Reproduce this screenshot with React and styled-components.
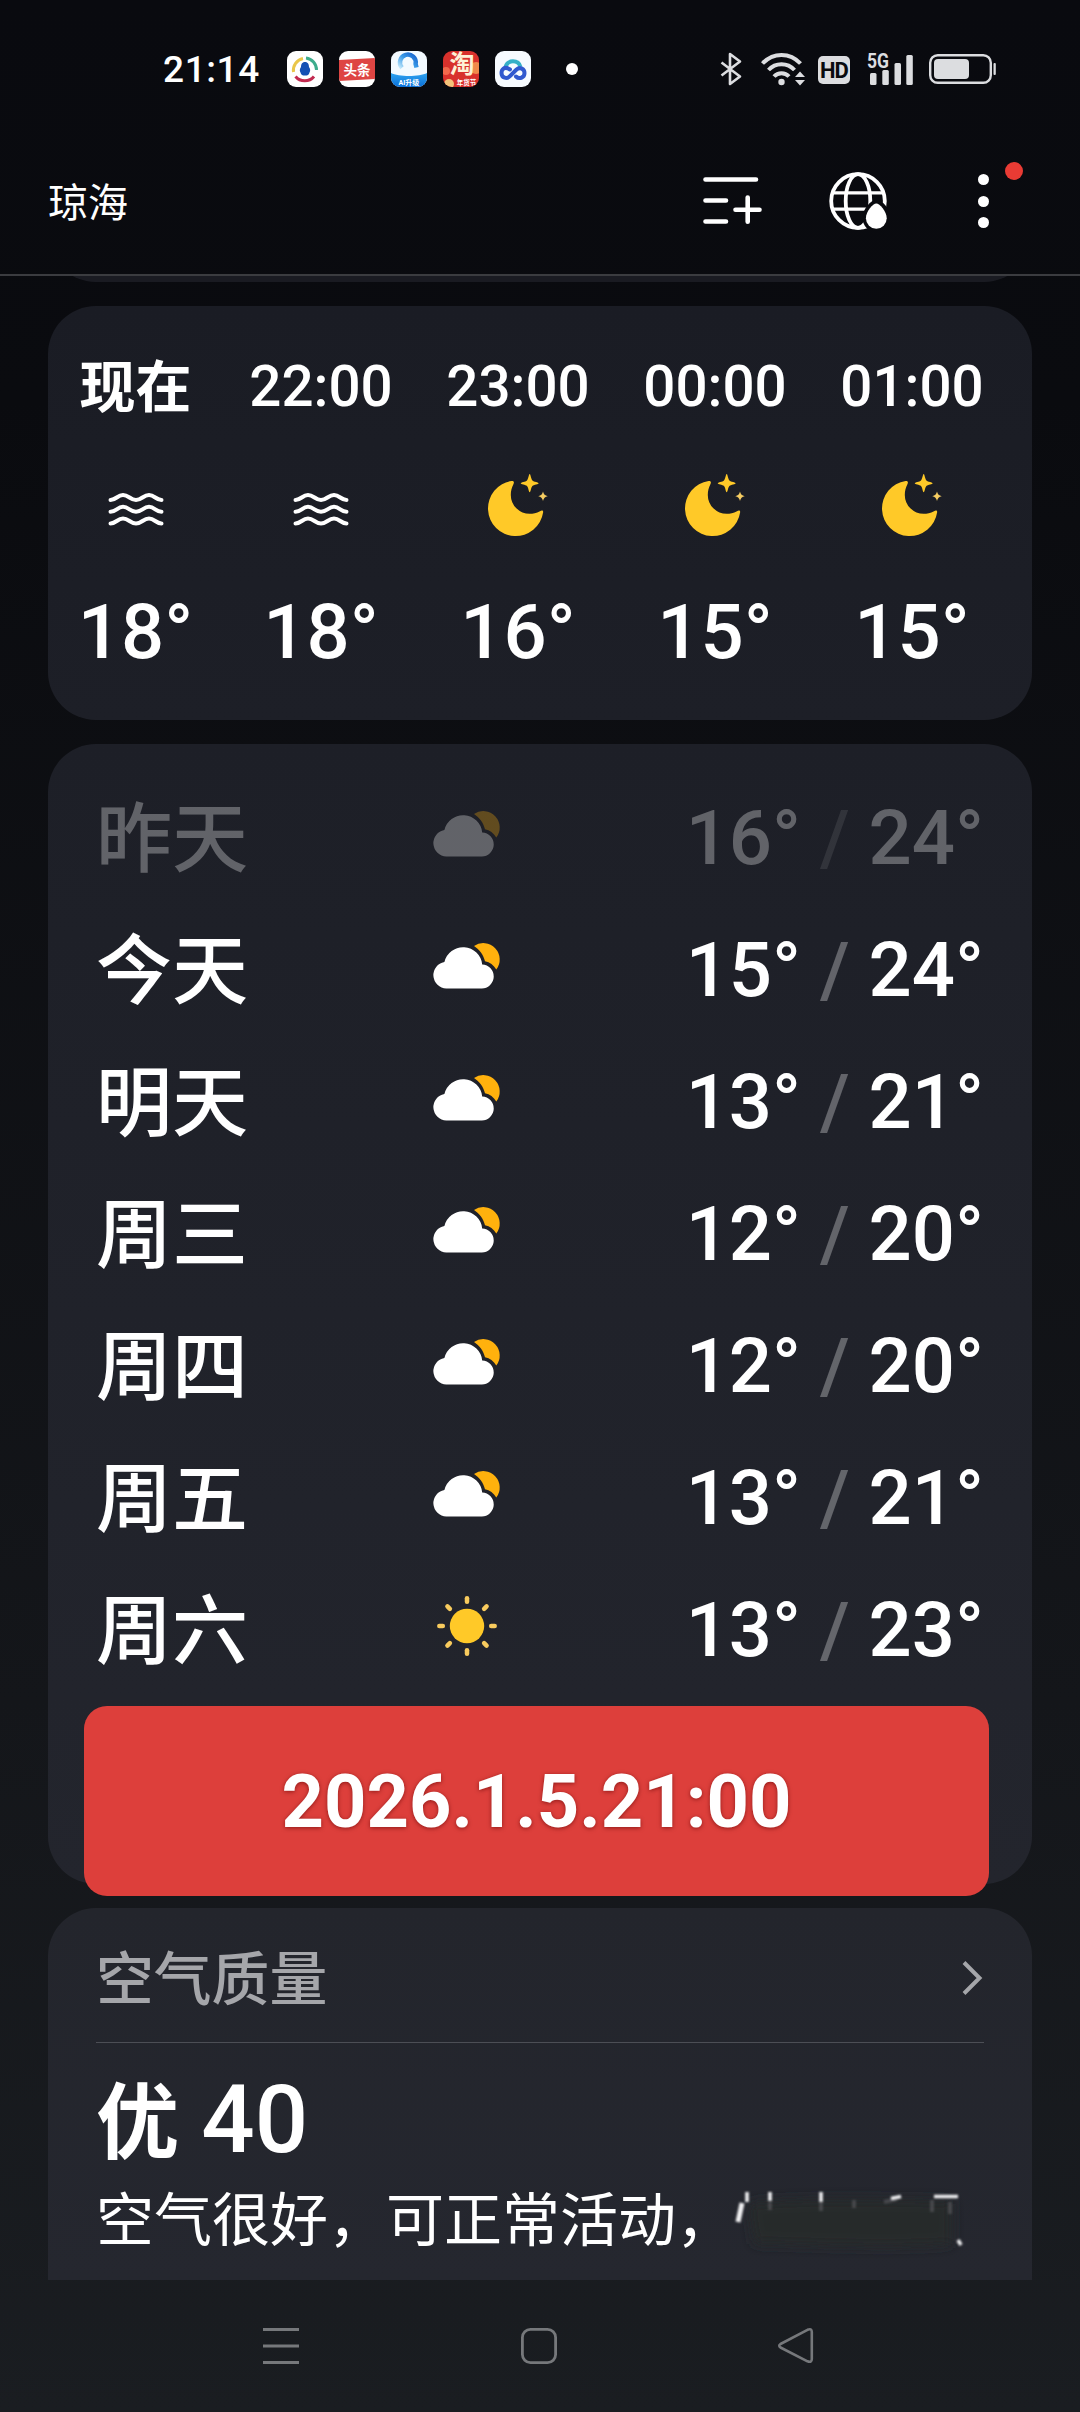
import React, { Component } from "react";
import styled, { createGlobalStyle } from "styled-components";

const GlobalStyle = createGlobalStyle`
    * {
        box-sizing: border-box;
    }
    body {
        margin: 0;
        background: #0a0b0f;
        color: #fff;
        font-family: Roboto, "Noto Sans CJK SC", sans-serif;
    }
    svg {
        display: block;
        flex: none;
        overflow: visible;
    }
`
let Screen = styled.div`
    width: 1080px;
    height: 2412px;
    display: flex;
    flex-direction: column;
    overflow: hidden;
    background: linear-gradient(#090a0f 0, #0a0b0f 400px, #14161a 1700px, #1a1d21 2412px);
`
let StatusBar = styled.div`
    height: 128px;
    padding: 10px 84px 0 163px;
    display: flex;
    align-items: center;
    flex: none;
`
let Clock = styled.span`
    width: 124px;
    padding-top: 1px;
    font-size: 37px;
    font-weight: 500;
    letter-spacing: 0.6px;
`
let AppIcons = styled.div`
    display: flex;
    gap: 16px;
    margin-right: 35px;
`
let MoreDot = styled.span`
    width: 12px;
    height: 12px;
    border-radius: 50%;
    background: #fff;
`
let SystemIcons = styled.div`
    display: flex;
    align-items: center;
    margin-left: auto;
    color: #dcdde0;
`
let HdBadge = styled.span`
    width: 32px;
    height: 28px;
    margin: 1px 17px 0 13px;
    border-radius: 5px;
    background: #dcdde0;
    color: #0a0b0f;
    font-size: 22px;
    font-weight: 700;
    line-height: 29px;
    text-align: center;
    letter-spacing: -1px;
`
let Header = styled.div`
    height: 148px;
    padding: 0 91px 0 48px;
    display: flex;
    align-items: center;
    flex: none;
    border-bottom: 2px solid #3b3c40;
`
let City = styled.h1`
    flex: 1;
    margin: 0;
    padding-bottom: 3px;
    font-size: 40px;
    font-weight: 400;
`
let HeaderIcons = styled.div`
    display: flex;
    align-items: center;
`
let MoreButton = styled.div`
    position: relative;
    margin-left: 89px;
    display: flex;
    flex-direction: column;
    gap: 10.5px;
    i {
        width: 11px;
        height: 11px;
        border-radius: 50%;
        background: #fff;
    }
    &::after {
        content: "";
        position: absolute;
        left: 27px;
        top: -12px;
        width: 18px;
        height: 18px;
        border-radius: 50%;
        background: #e93b34;
    }
`
let Content = styled.div`
    flex: 1;
    min-height: 0;
    padding: 0 48px;
    display: flex;
    flex-direction: column;
    gap: 24px;
    overflow: hidden;
`
let Card = styled.section`
    position: relative;
    flex: none;
    border-radius: 48px;
    background: linear-gradient(${props => props.$from}, ${props => props.$to});
`
// only the lower edge of this card is still in view
let ScrolledCard = styled(Card)`
    height: 96px;
    margin-top: -90px;
`
let HourlyCard = styled(Card)`
    height: 414px;
    padding: 45px 32px 0 31px;
    display: flex;
    gap: 61px;
    white-space: nowrap;
`
let Hour = styled.div`
    width: ${props => props.$now ? '113px' : '136px'};
    flex: none;
    display: flex;
    flex-direction: column;
    align-items: center;
    font-weight: 500;
    .time {
        height: 72px;
        font-size: ${props => props.$now ? '56px' : '56.5px'};
        font-weight: ${props => props.$now ? 700 : 500};
        line-height: ${props => props.$now ? '74px' : '73px'};
    }
    .icon {
        height: 166px;
        display: flex;
        align-items: center;
    }
    .temp {
        height: 84px;
        font-size: 76px;
        line-height: 87px;
    }
`
let DailyCard = styled(Card)`
    height: 1140px;
    padding: 28px 48px 0;
`
let Day = styled.div`
    height: 132px;
    display: grid;
    grid-template-columns: 338px 66px 1fr;
    grid-template-rows: 132px;
    align-items: center;
    font-size: 76px;
    font-weight: 500;
    line-height: 132px;
    opacity: ${props => props.$past ? 0.3 : 1};
    .name {
        padding-top: 3px;
    }
    .icon {
        padding-bottom: 10px;
        display: flex;
        justify-content: center;
    }
    .range {
        text-align: right;
        white-space: pre;
    }
    .range i {
        font-style: normal;
        opacity: 0.3;
    }
`
let Banner = styled.div`
    position: absolute;
    left: 36px;
    top: 962px;
    z-index: 1;
    width: 905px;
    height: 190px;
    border-radius: 23px;
    background: #dd3f3b;
    font-size: 74px;
    font-weight: 700;
    line-height: 191px;
    text-align: center;
    text-shadow: 0 1px 4px rgba(90, 0, 0, 0.6);
`
let AirCard = styled(Card)`
    height: 372px;
    padding: 0 48px;
    border-radius: 48px 48px 0 0;
`
let AirHeader = styled.div`
    height: 135px;
    display: flex;
    align-items: center;
    justify-content: space-between;
    border-bottom: 1px solid #4c4e55;
    color: #a5a6aa;
    font-size: 57.8px;
    font-weight: 500;
    svg {
        margin-top: 6px;
    }
`
let AirQuality = styled.div`
    height: 116px;
    margin-top: 19px;
    font-size: 94px;
    font-weight: 500;
    line-height: 117px;
    span {
        margin-right: -1px;
        font-size: 83px;
        font-weight: 700;
    }
`
let AirAdvice = styled.div`
    height: 84px;
    display: flex;
    font-size: 58px;
    line-height: 87px;
    white-space: nowrap;
`
let NavBar = styled.div`
    height: 132px;
    padding: 0 265px 0 262px;
    display: flex;
    align-items: center;
    justify-content: space-between;
    flex: none;
    color: #76787b;
`

const AppTile = ({ children, bg = '#fff' }) => (
    <svg width="36" height="36" viewBox="0 0 36 36">
        <defs>
            <clipPath id="tile"><rect width="36" height="36" rx="9" /></clipPath>
            <linearGradient id="sky" x1="0" y1="0" x2="0" y2="1">
                <stop offset="0" stopColor="#2fa4f0" />
                <stop offset="1" stopColor="#0a6fd8" />
            </linearGradient>
            <linearGradient id="ring" x1="0" y1="1" x2="1" y2="0">
                <stop offset="0" stopColor="#bfe6fa" />
                <stop offset="0.5" stopColor="#3a9be8" />
                <stop offset="1" stopColor="#1560cc" />
            </linearGradient>
        </defs>
        <g clipPath="url(#tile)">
            <rect width="36" height="36" fill={bg} />
            {children}
        </g>
    </svg>
)

const FogIcon = () => (
    <svg width="62" height="64" viewBox="0 0 62 64" fill="none" stroke="#fff" strokeWidth="4" strokeLinecap="round">
        {[0, 11.8, 23.5].map(y => (
            <path key={y} transform={`translate(0 ${y})`} d="M5.5 26 C11 26 12.5 21 18 21 C23.500 21 25.500 26 31 26 C36.500 26 38.500 21 44 21 C49.500 21 51 26 56.500 26" />
        ))}
    </svg>
)

const MoonIcon = () => (
    <svg width="62" height="64" viewBox="0 0 62 64" fill="#ffc928">
        <path d="M24.600 7 A27.700 27.700 0 1 0 56.100 38.500 C56.500 36.600 55 36 53 37.200 C49.500 39 46 39.800 42.700 39.800 A18.800 18.800 0 0 1 23.800 21 C23.800 17 24.800 13.500 26.400 10.300 C27.500 8 26.800 6.700 24.600 7Z" />
        <path d="M42.700 0 C43.600 0 44 5 45.400 6.400 C46.800 7.800 51.700 8.200 51.700 9.200 C51.700 10.200 46.800 10.600 45.400 12 C44 13.400 43.600 18.300 42.700 18.300 C41.800 18.300 41.400 13.400 40 12 C38.600 10.600 33.700 10.200 33.700 9.200 C33.700 8.200 38.600 7.800 40 6.400 C41.400 5 41.800 0 42.700 0Z" />
        <path fill="#f6cd62" d="M56 17.600 Q56.800 21.500 60.700 22.300 Q56.800 23.100 56 27 Q55.200 23.100 51.300 22.300 Q55.200 21.500 56 17.600Z" />
    </svg>
)

const CloudyIcon = () => (
    <svg width="68" height="47" viewBox="0 0 68 47">
        <path fill="#ffb10d" d="M41 4 A16.400 16.400 0 0 1 63.300 27.500 C60.500 23 57 20.300 52 19.300 C50.500 13 46.500 7.500 41 4Z" />
        <path fill="#fff" d="M13.300 46.400 A13.300 13.300 0 0 1 11.400 20 A19.200 19.200 0 0 1 49.200 22.400 A12 12 0 0 1 48.300 46.400Z" />
    </svg>
)

const SunnyIcon = () => (
    <svg width="62" height="62" viewBox="0 -1 62 62" stroke="#f8cb5e" strokeWidth="4.500" strokeLinecap="round">
        <circle cx="31" cy="31" r="17.200" fill="#ffc928" stroke="none" />
        {[0, 45, 90, 135, 180, 225, 270, 315].map(a => (
            <path key={a} transform={`rotate(${a} 31 31)`} d="M31 3.300 V6.800" />
        ))}
    </svg>
)

const icons = { fog: FogIcon, moon: MoonIcon, cloudy: CloudyIcon, sunny: SunnyIcon };

const WeatherIcon = ({ type }) => {
    const Icon = icons[type];
    return <div className="icon"><Icon /></div>;
}

class App extends Component {

    state = {
        hours: [
            { time: '现在', icon: 'fog', temp: 18 },
            { time: '22:00', icon: 'fog', temp: 18 },
            { time: '23:00', icon: 'moon', temp: 16 },
            { time: '00:00', icon: 'moon', temp: 15 },
            { time: '01:00', icon: 'moon', temp: 15 }
        ],
        days: [
            { name: '昨天', icon: 'cloudy', low: 16, high: 24 },
            { name: '今天', icon: 'cloudy', low: 15, high: 24 },
            { name: '明天', icon: 'cloudy', low: 13, high: 21 },
            { name: '周三', icon: 'cloudy', low: 12, high: 20 },
            { name: '周四', icon: 'cloudy', low: 12, high: 20 },
            { name: '周五', icon: 'cloudy', low: 13, high: 21 },
            { name: '周六', icon: 'sunny', low: 13, high: 23 }
        ]
    };

    renderStatusBar() {
        return (
            <StatusBar>
                <Clock>21:14</Clock>
                <AppIcons>
                    <AppTile>
                        <g fill="none" strokeWidth="3">
                            <path d="M6.500 21 A12 12 0 0 1 16 7.500" stroke="#e9c64a" />
                            <path d="M19 7 A12 12 0 0 1 29.500 19" stroke="#3dac8c" />
                            <path d="M8.500 25.500 A12 12 0 0 0 27 25.500" stroke="#c22a50" />
                        </g>
                        <path fill="#1450b4" d="M18 11 C21 11 22 13.500 22 16 C23.500 18 23.500 20 22.500 21.500 C22 24 20.500 24.500 18 24.500 C15.500 24.500 14 24 13.500 21.500 C12.500 20 12.500 18 14 16 C14 13.500 15 11 18 11Z" />
                    </AppTile>
                    <AppTile>
                        <path fill="#de4543" d="M0 9 L36 7 V28 L0 30Z" />
                        <text x="18" y="23.500" textAnchor="middle" fontSize="13.500" fontWeight="700" fill="#fff">头条</text>
                    </AppTile>
                    <AppTile bg="#f3faff">
                        <path fill="url(#sky)" d="M0 22 C8 26 28 26 36 22 V36 H0Z" />
                        <path fill="none" stroke="url(#ring)" strokeWidth="4.500" d="M11 16.800 A7.900 7.900 0 1 1 24.600 13 L25.500 16.500" />
                        <text x="18" y="33.800" textAnchor="middle" fontSize="7" fontWeight="700" fill="#fff">AI升级</text>
                    </AppTile>
                    <AppTile bg="#d8312c">
                        <circle cx="33" cy="17" r="6" fill="#f08a4b" />
                        <circle cx="3" cy="20" r="4" fill="#f2684c" />
                        <circle cx="6" cy="33" r="5" fill="#f3c37a" />
                        <text x="19" y="21.500" textAnchor="middle" fontSize="25" fontWeight="700" fill="#fdf1d6">淘</text>
                        <text x="23.500" y="33.800" textAnchor="middle" fontSize="6.500" fontWeight="700" fill="#fff">年货节</text>
                    </AppTile>
                    <AppTile bg="#f7fbff">
                        <path fill="none" stroke="#35b0c8" strokeWidth="4" d="M10.500 16 A7.800 7.800 0 0 1 25.500 16" />
                        <path fill="none" stroke="#3159cf" strokeWidth="4" strokeLinecap="round" d="M15 18.500 C9 14.500 6.500 19 6.500 22 C6.500 27 12 28.500 15 25 L21.500 18.500 C25 15.500 29.500 18 29.500 22 C29.500 27 24 28.500 21 25.500" />
                    </AppTile>
                </AppIcons>
                <MoreDot />
                <SystemIcons>
                    <svg width="22" height="34" viewBox="0 0 22 34" fill="none" stroke="currentColor" strokeWidth="2.600" strokeLinejoin="round">
                        <path d="M1.500 10.500 L20 24.500 L10 32 V2 L20 9.500 L1.500 23.500" />
                    </svg>
                    <svg width="44" height="34" viewBox="0 0 44 34" fill="none" stroke="currentColor" strokeWidth="4" style={{ marginLeft: 19 }}>
                        <path d="M1.500 11.500 C12 0 29 0 39.500 11.500 M7.500 18 C14.500 10.300 26.500 10.300 33.500 18 M13 24.500 C17 20 24 20 28 24.500" />
                        <circle cx="20.500" cy="30" r="3.200" fill="currentColor" stroke="none" />
                        <path fill="currentColor" stroke="none" d="M39 19.500 L44 25 H34Z M39 33.500 L34 28 H44Z" />
                    </svg>
                    <HdBadge>HD</HdBadge>
                    <svg width="47" height="34" viewBox="0 0 47 34" fill="currentColor">
                        <text x="0" y="16" fontSize="20" fontWeight="700" textLength="22" lengthAdjust="spacingAndGlyphs">5G</text>
                        <rect x="3" y="21" width="6.500" height="12" rx="1.500" />
                        <rect x="15.300" y="18" width="6.500" height="15" rx="1.500" />
                        <rect x="27.500" y="11" width="6.500" height="22" rx="1.500" />
                        <rect x="39.300" y="3" width="6.500" height="30" rx="1.500" />
                    </svg>
                    <svg width="67" height="30" viewBox="0 0 67 30" style={{ marginLeft: 15 }}>
                        <rect x="1.200" y="1.200" width="60.600" height="27.600" rx="7.500" fill="none" stroke="currentColor" strokeWidth="2.400" />
                        <rect x="5" y="5" width="35" height="20" rx="4" fill="currentColor" />
                        <rect x="64.500" y="9" width="2.300" height="12" rx="1" fill="currentColor" />
                    </svg>
                </SystemIcons>
            </StatusBar>
        );
    }

    renderHeader() {
        return (
            <Header>
                <City>琼海</City>
                <HeaderIcons>
                    <svg width="60" height="60" viewBox="0 0 60 60" stroke="#fff" strokeWidth="4.600" strokeLinecap="round">
                        <path d="M3.500 8.500 H54 M3.500 29.500 H24 M3.500 50.500 H24 M33.500 38.700 H57.500 M45.700 26.500 V50.800" />
                    </svg>
                    <svg width="60" height="60" viewBox="0 0 60 60" fill="none" stroke="#fff" strokeWidth="3.800" style={{ marginLeft: 67 }}>
                        <defs>
                            <mask id="globe">
                                <rect width="60" height="60" fill="#fff" stroke="none" />
                                <path d="M47.500 32.500 C50.500 32.500 58 39 58 47 A10.500 10.500 0 0 1 37 47 C37 39 44.500 32.500 47.500 32.500Z" fill="#000" stroke="#000" strokeWidth="7" />
                            </mask>
                        </defs>
                        <g mask="url(#globe)">
                            <circle cx="29" cy="30" r="26.800" />
                            <ellipse cx="29" cy="30" rx="12.300" ry="26.800" />
                            <path d="M5 21.800 H53 M5 38.200 H53" strokeWidth="3.200" />
                        </g>
                        <path fill="#fff" stroke="none" d="M47.300 32.500 C50.500 32.500 57.700 40 57.700 47.300 A10.400 10.400 0 0 1 36.900 47.300 C36.900 40 44.100 32.500 47.300 32.500Z" />
                    </svg>
                    <MoreButton><i /><i /><i /></MoreButton>
                </HeaderIcons>
            </Header>
        );
    }

    render() {
        return (
            <Screen>
                <GlobalStyle />
                {this.renderStatusBar()}
                {this.renderHeader()}
                <Content>
                    <ScrolledCard $from="#1a1b22" $to="#1a1b22" />
                    <HourlyCard $from="#1a1c24" $to="#1d1f27">
                        {this.state.hours.map((hour, i) => (
                            <Hour key={hour.time} $now={i === 0}>
                                <div className="time">{hour.time}</div>
                                <WeatherIcon type={hour.icon} />
                                <div className="temp">{hour.temp}°</div>
                            </Hour>
                        ))}
                    </HourlyCard>
                    <DailyCard $from="#1d1f27" $to="#23252d">
                        {this.state.days.map((day, i) => (
                            <Day key={day.name} $past={i === 0}>
                                <div className="name">{day.name}</div>
                                <WeatherIcon type={day.icon} />
                                <div className="range">{day.low}° <i>/</i> {day.high}°</div>
                            </Day>
                        ))}
                        <Banner>2026.1.5.21:00</Banner>
                    </DailyCard>
                    <AirCard $from="#23252c" $to="#25272f">
                        <AirHeader>
                            空气质量
                            <svg width="22" height="36" viewBox="0 0 22 36" fill="none" stroke="currentColor" strokeWidth="4">
                                <path d="M2 2.500 L17.500 18 L2 33.500" />
                            </svg>
                        </AirHeader>
                        <AirQuality><span>优</span> 40</AirQuality>
                        <AirAdvice>
                            空气很好，可正常活动，
                            {/* the rest of the sentence is rubbed out */}
                            <svg width="240" height="84" viewBox="0 0 240 84">
                                <defs>
                                    <filter id="smudge" x="-20%" y="-50%" width="140%" height="200%"><feGaussianBlur stdDeviation="6" /></filter>
                                    <filter id="soft" x="-10%" y="-20%" width="120%" height="140%"><feGaussianBlur stdDeviation="0.9" /></filter>
                                </defs>
                                <path fill="#28292c" filter="url(#smudge)" d="M14 26 C50 18 180 22 218 22 V66 C160 72 60 66 20 66Z" />
                                <g fill="none" stroke="#5b5c60" strokeWidth="4" filter="url(#soft)" opacity="0.6">
                                    <path d="M36 24 V32 M87 24 V33 M150 24 L163 21 M198 22 V34 M216 24 V36 M120 22 V30" />
                                </g>
                                <g fill="none" stroke="#f0f0f2" strokeWidth="3.600" filter="url(#soft)">
                                    <path d="M13 14 V24 M36 14 V23 M87 14 V24" />
                                    <path d="M157 20.500 L167 18.500 M200 18.500 H224 M224 62 L227 67" />
                                    <path d="M8 25 L4 44" strokeWidth="5" />
                                </g>
                            </svg>
                        </AirAdvice>
                    </AirCard>
                </Content>
                <NavBar>
                    <svg width="38" height="38" viewBox="0 0 38 38" stroke="currentColor" strokeWidth="3">
                        <path d="M1 2.500 H37 M1 19 H37 M1 35.500 H37" />
                    </svg>
                    <svg width="38" height="38" viewBox="0 0 38 38" fill="none" stroke="currentColor" strokeWidth="2.800">
                        <rect x="2.400" y="2.400" width="33.200" height="33.200" rx="8" />
                    </svg>
                    <svg width="38" height="38" viewBox="0 0 38 38" fill="none" stroke="currentColor" strokeWidth="2.600" strokeLinejoin="round">
                        <path d="M3.500 17 L30.500 2.800 Q34.800 1 34.800 5 V32 Q34.800 36 30.500 34.300 L3.500 20.500 Q1 18.700 3.500 17Z" />
                    </svg>
                </NavBar>
            </Screen>
        );
    }
}
export default App;
